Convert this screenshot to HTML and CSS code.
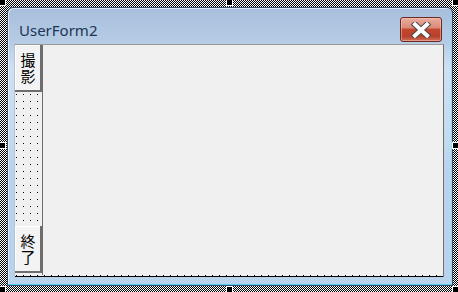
FILE: index.html
```html
<!DOCTYPE html>
<html>
<head>
<meta charset="utf-8">
<link rel="stylesheet" href="styles.css">
</head>
<body>
<div class="window">
  <div class="titlebar">
    <span class="title">UserForm2</span>
    <div class="close">
      <svg width="24" height="16" viewBox="0 0 24 16">
        <path d="M6 2.5 L18 13.5 M18 2.5 L6 13.5" stroke="#4a4a4a" stroke-width="6" stroke-linecap="square" fill="none"/>
        <path d="M6 2.5 L18 13.5 M18 2.5 L6 13.5" stroke="#ffffff" stroke-width="4" stroke-linecap="square" fill="none"/>
      </svg>
    </div>
  </div>
  <div class="client">
    <div class="client-body">
      <div class="strip">
        <div class="btn">撮影</div>
        <div class="btn">終了</div>
      </div>
      <div class="area"></div>
    </div>
    <div class="ruler"></div>
  </div>
</div>
<span class="handle h-tl"></span>
<span class="handle h-tm"></span>
<span class="handle h-tr"></span>
<span class="handle h-ml"></span>
<span class="handle h-mr"></span>
<span class="handle h-bl"></span>
<span class="handle h-bm"></span>
<span class="handle h-br"></span>
</body>
</html>
```
FILE: styles.css
```css
html, body {
  margin: 0;
}
body {
  width: 458px;
  height: 292px;
  box-sizing: border-box;
  padding: 7px 5px 6px 7px;
  position: relative;
  overflow: hidden;
  background: repeating-conic-gradient(#000 0 25%, #fff 0 50%) 0 0 / 2px 2px;
  font-family: "Noto Sans", "Liberation Sans", sans-serif;
}
.window {
  width: 446px;
  height: 279px;
  box-sizing: border-box;
  border: 1px solid #3a4d66;
  border-radius: 6px 6px 0 0;
  background: linear-gradient(#a7bfdc 0px, #b7cde6 36px, #cfe0f2 60px, #c4daf0 130px, #b9d3ec 160px, #b9d3ec 100%);
  box-shadow: inset 0 -1px 0 #4fd0f2, inset -1px 0 0 #8fd8f2, inset 1px 1px 0 rgba(255,255,255,0.6);
  display: flex;
  flex-direction: column;
}
.titlebar {
  height: 36px;
  display: flex;
  align-items: flex-start;
  justify-content: space-between;
  padding-left: 11px;
  padding-right: 10px;
}
.title {
  font-size: 15px;
  line-height: 20px;
  margin-top: 12px;
  color: #1c3556;
  font-family: "Noto Sans", "Open Sans", sans-serif;
}
.close {
  margin-top: 9px;
  width: 42px;
  height: 25px;
  box-sizing: border-box;
  border: 1px solid #6a2a22;
  border-radius: 3px;
  background: linear-gradient(#e9ad9e 0%, #dc8a78 42%, #c3462f 50%, #b8402a 80%, #d0715c 100%);
  box-shadow: inset 0 0 0 1px rgba(255,200,190,0.5);
  display: flex;
  align-items: center;
  justify-content: center;
}
.client {
  flex: 1;
  margin: 0 8px 8px 6px;
  display: flex;
  flex-direction: column;
  border-top: 1px solid #9a9a9a;
  border-left: 1px solid #b4c4d6;
  border-right: 1px solid #707070;
  background: #f0f0f0;
}
.client-body {
  flex: 1;
  display: grid;
  grid-template-columns: 28px 1fr;
}
.strip {
  border-right: 1px solid #6d6d6d;
  background: #f0f0f0 conic-gradient(at 1px 1px, transparent 75%, #000 0) 1px 0 / 7px 7px;
  display: flex;
  flex-direction: column;
  justify-content: space-between;
  padding-bottom: 2px;
}
.btn {
  height: 47px;
  box-sizing: border-box;
  background: #f3f3f3;
  border-right: 2px solid #6e6e6e;
  border-bottom: 2px solid #6e6e6e;
  box-shadow: inset 1px 1px 0 #ffffff;
  font-family: "Noto Sans CJK JP", sans-serif;
  font-size: 15px;
  line-height: 16px;
  color: #000;
  display: flex;
  align-items: center;
  justify-content: center;
  text-align: center;
  padding: 0 5px 0 6px;
  word-break: break-all;
}
.area {
  background: #f0f0f0;
}
.ruler {
  height: 2px;
  background: linear-gradient(#000, #000) 0 1px / 100% 1px no-repeat,
              conic-gradient(at 1px 1px, transparent 75%, #000 0) 1px 0 / 7px 2px;
  background-color: #f0f0f0;
}
.handle {
  position: absolute;
  width: 5px;
  height: 5px;
  background: #000;
  outline: 1px solid #fff;
}
.h-tl { left: 0; top: 0; }
.h-tm { left: 227px; top: 0; }
.h-tr { left: 453px; top: 0; }
.h-ml { left: 0; top: 143px; }
.h-mr { left: 453px; top: 143px; }
.h-bl { left: 0; top: 287px; }
.h-bm { left: 227px; top: 287px; }
.h-br { left: 453px; top: 287px; }
```
